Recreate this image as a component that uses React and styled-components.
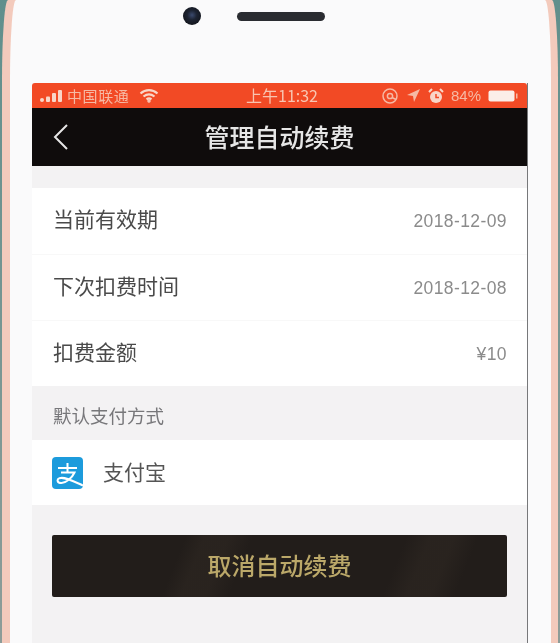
import React from 'react'
import styled, { createGlobalStyle } from 'styled-components'

const Global = createGlobalStyle`
  html, body { margin: 0; padding: 0; background: #8d9c98; }
  * { box-sizing: border-box; }
`;

const Page = styled.div`
  width: 560px;
  height: 643px;
  overflow: hidden;
  padding: 0 0 0 2px;
  background: linear-gradient(180deg, #5f8f8c 0, #8d9c98 100%);
  font-family: "Noto Sans CJK SC", "Liberation Sans", sans-serif;
  filter: blur(0.7px);
`;

const Phone = styled.div`
  width: 556px;
  height: 643px;
  padding: 0 7px 0 8px;
  background: #f3cabc;
  border-top-left-radius: 6px 80px;
  border-top-right-radius: 6px 80px;
`;

const Body = styled.div`
  height: 100%;
  padding: 0 22px;
  display: flex;
  flex-direction: column;
  background: #fafafb;
  border-top-left-radius: 6px 80px;
  border-top-right-radius: 6px 80px;
`;

const Earpiece = styled.div`
  height: 83px;
  padding: 7px 0 0 151px;
  display: flex;
  align-items: flex-start;
  gap: 36px;
  flex-shrink: 0;
`;

const Camera = styled.div`
  width: 18px;
  height: 18px;
  border-radius: 50%;
  background: radial-gradient(circle at 50% 45%, #3b4a6e 0, #1d2433 35%, #14171f 70%);
`;

const Speaker = styled.div`
  width: 88px;
  height: 9px;
  margin-top: 5px;
  border-radius: 5px;
  background: #2a2c31;
`;

const Screen = styled.div`
  flex: 1;
  width: 496px;
  display: flex;
  flex-direction: column;
  background: #f3f2f3;
  border-right: 1px solid #77787a;
`;

const StatusBar = styled.div`
  height: 25px;
  padding: 0 9px 0 8px;
  display: flex;
  align-items: center;
  justify-content: space-between;
  background: #f24a25;
  color: #f6b9a4;
  font-size: 15px;
  border-radius: 3px 3px 0 0;
`;

const StatusGroup = styled.div`
  display: flex;
  align-items: center;
  gap: ${props => props.$gap || 4}px;
  width: ${props => props.$width || 'auto'};
  justify-content: ${props => props.$end ? 'flex-end' : 'flex-start'};
`;

const Carrier = styled.span`
  letter-spacing: 0.6px;
  line-height: 25px;
  margin-right: 7px;
`;

const Clock = styled.span`
  font-size: 16px;
  line-height: 25px;
  margin-left: 6px;
  color: #f8c4b0;
`;

const Percent = styled.span`
  font-family: "Liberation Sans", sans-serif;
  font-size: 15px;
  color: #f6b9a4;
`;

const NavBar = styled.div`
  height: 58px;
  position: relative;
  display: flex;
  align-items: center;
  justify-content: center;
  background: #0f0c0c;
`;

const Back = styled.svg`
  position: absolute;
  left: 20px;
  top: 15px;
`;

const NavTitle = styled.div`
  font-size: 25px;
  font-weight: 500;
  color: #e6e6e6;
  line-height: 58px;
  padding-bottom: 2px;
`;

const Card = styled.div`
  margin-top: ${props => props.$top || 0}px;
  background: #fff;
`;

const Row = styled.div`
  height: 66px;
  padding: 0 20px 0 21px;
  display: flex;
  align-items: center;
  justify-content: space-between;
  & + & { border-top: 1px solid #f8f8f8; }
`;

const Label = styled.span`
  font-size: 21px;
  color: #4a4a4a;
  margin-bottom: 6px;
`;

const Value = styled.span`
  font-family: "Liberation Sans", sans-serif;
  font-size: 17.5px;
  letter-spacing: 0.4px;
  color: #8b8b8b;
  margin-top: 1px;
`;

const SectionTitle = styled.div`
  height: 54px;
  padding: 4px 0 0 21px;
  display: flex;
  align-items: center;
  font-size: 18.5px;
  color: #77777a;
`;

const PayRow = styled.div`
  height: 65px;
  padding: 0 20px 0;
  display: flex;
  align-items: center;
  gap: 20px;
  background: #fff;
`;

const PayName = styled.span`
  font-size: 21px;
  color: #555;
  margin-bottom: 4px;
`;

const CancelButton = styled.button`
  width: 455px;
  height: 62px;
  margin: 30px 0 0 20px;
  padding: 0 0 4px;
  border: 0;
  border-radius: 2px;
  font-family: inherit;
  font-size: 24px;
  font-weight: 500;
  color: #bba869;
  background:
    linear-gradient(112deg, transparent 0 28%, rgba(70,60,50,.2) 32% 37%, transparent 42% 74%, rgba(70,60,50,.2) 79% 84%, transparent 89%),
    #221d1a;
`;

const AlipayIcon = () => (
  <svg width="31" height="32" viewBox="0 0 31 32">
    <rect width="31" height="32" rx="4" fill="#1c9bdc" />
    <path d="M6 11H25M15.5 6V15M9 15.5H22.5C20 21 14 26 9.5 26C5 26 4.5 22.5 7.5 21.2C12 19.5 20 23.5 31 28.5" fill="none" stroke="#fff" strokeWidth="2" />
  </svg>
)

const App = () => {
  return (
    <Page>
      <Global />
      <Phone>
        <Body>
          <Earpiece>
            <Camera />
            <Speaker />
          </Earpiece>
          <Screen>
            <StatusBar>
              <StatusGroup $gap={3} $width="170px">
                <svg width="24" height="14" viewBox="0 0 24 14" fill="#f9d6c8">
                  <circle cx="2" cy="11" r="2" />
                  <rect x="6" y="7.5" width="4" height="5.5" rx="1" />
                  <rect x="12" y="4" width="4" height="9" rx="1" />
                  <rect x="18" y="1" width="4" height="12" rx="1" />
                </svg>
                <Carrier>中国联通</Carrier>
                <svg width="20" height="15" viewBox="0 0 20 15" fill="none" stroke="#f9d6c8" strokeWidth="2.2">
                  <path d="M1.5 5.5C6.5 1 13.5 1 18.5 5.5" />
                  <path d="M4.5 8.5C8 5.7 12 5.7 15.5 8.5" />
                  <path d="M7.5 11.3C9 10.2 11 10.2 12.5 11.3" />
                  <circle cx="10" cy="13" r="0.6" fill="#f9d6c8" />
                </svg>
              </StatusGroup>
              <Clock>上午11:32</Clock>
              <StatusGroup $gap={7} $width="170px" $end>
                <svg width="18" height="18" viewBox="0 0 18 18" fill="none" stroke="#f6b9a4" strokeWidth="1.5">
                  <circle cx="9" cy="9" r="7" />
                  <circle cx="9" cy="9" r="2.6" />
                  <path d="M11 10.5L15 12.5" />
                </svg>
                <svg width="15" height="15" viewBox="0 0 15 15" fill="#f6b9a4">
                  <path d="M14 1L8 14L7 8L1 7Z" />
                </svg>
                <svg width="16" height="16" viewBox="0 0 16 16">
                  <circle cx="8" cy="9" r="6" fill="#f9d6c8" />
                  <path d="M1 4L4 1M15 4L12 1" stroke="#f9d6c8" strokeWidth="2" />
                  <path d="M8 6V9.5H11" stroke="#f24a25" strokeWidth="1.5" fill="none" />
                </svg>
                <Percent>84%</Percent>
                <svg width="30" height="14" viewBox="0 0 30 14">
                  <rect x="0.5" y="1.5" width="26" height="11" rx="2" fill="#fbeee8" />
                  <rect x="28" y="4.5" width="1.5" height="5" fill="#f6b9a4" />
                </svg>
              </StatusGroup>
            </StatusBar>
            <NavBar>
              <Back width="18" height="28" viewBox="0 0 18 28" fill="none" stroke="#e6e6e6" strokeWidth="2">
                <path d="M15 2L3 14L15 26" />
              </Back>
              <NavTitle>管理自动续费</NavTitle>
            </NavBar>
            <Card $top={22}>
              <Row><Label>当前有效期</Label><Value>2018-12-09</Value></Row>
              <Row><Label>下次扣费时间</Label><Value>2018-12-08</Value></Row>
              <Row><Label>扣费金额</Label><Value>¥10</Value></Row>
            </Card>
            <SectionTitle>默认支付方式</SectionTitle>
            <PayRow>
              <AlipayIcon />
              <PayName>支付宝</PayName>
            </PayRow>
            <CancelButton>取消自动续费</CancelButton>
          </Screen>
        </Body>
      </Phone>
    </Page>
  )
}

export default App
